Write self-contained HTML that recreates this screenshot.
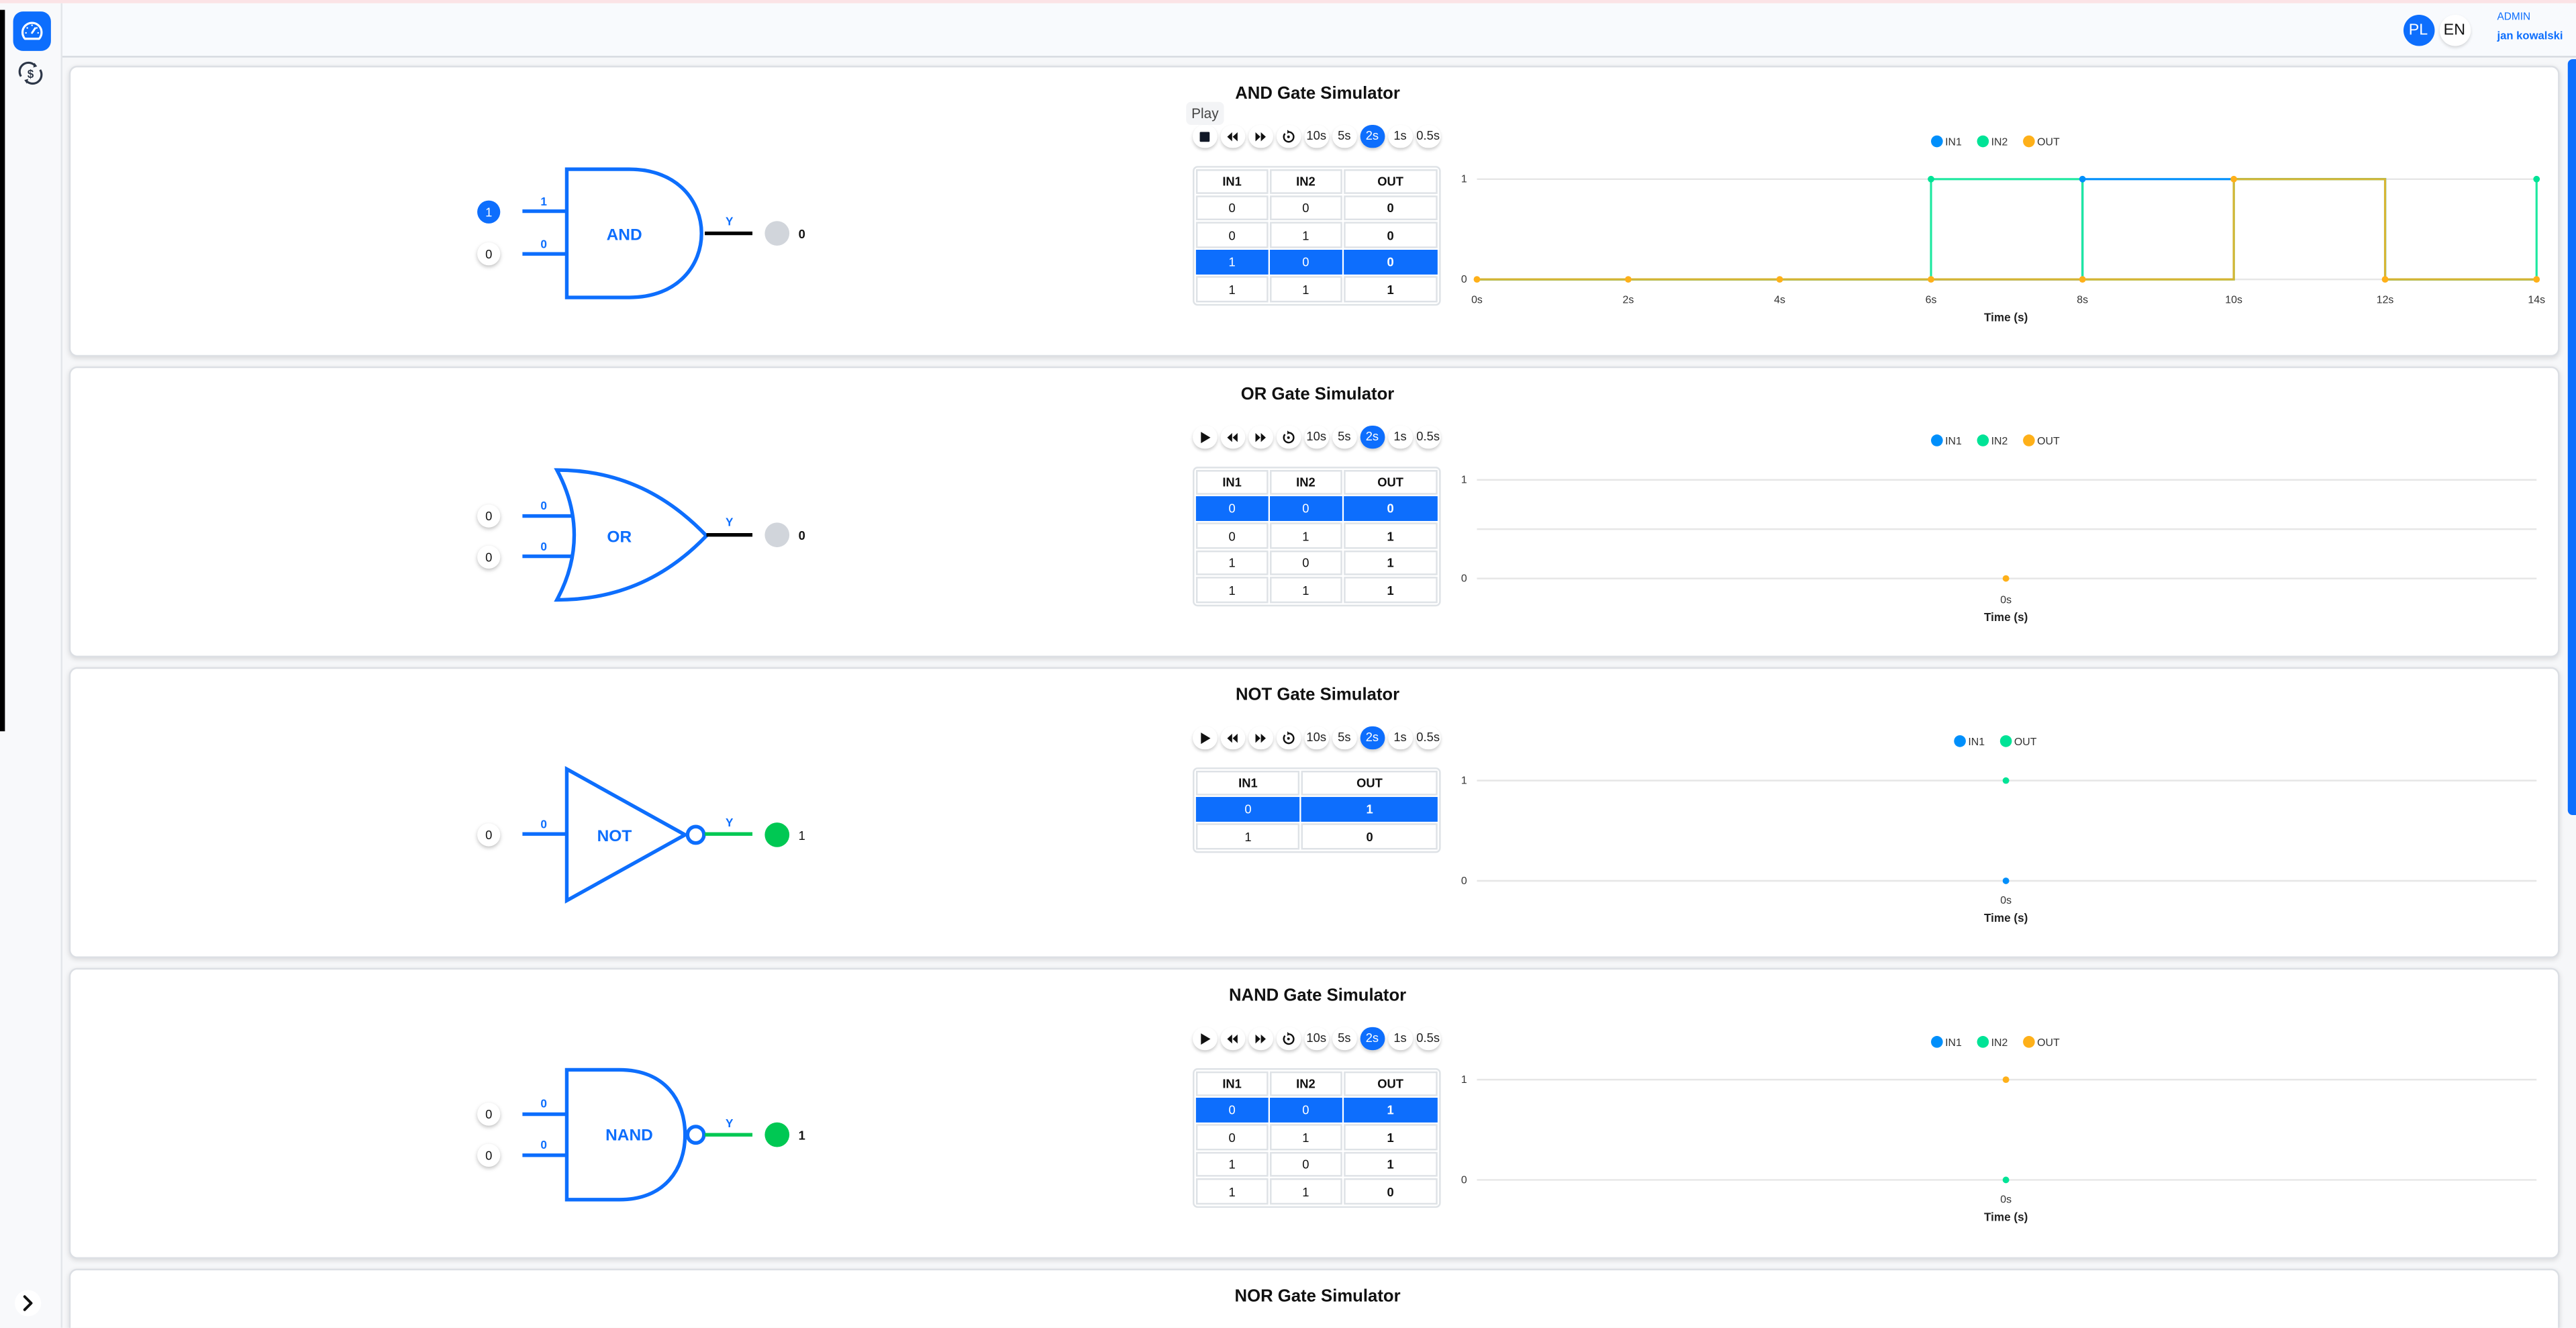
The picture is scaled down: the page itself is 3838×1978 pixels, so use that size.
<!DOCTYPE html>
<html><head><meta charset="utf-8">
<style>
html,body{margin:0;padding:0;width:3838px;height:1978px;overflow:hidden;background:#f6f7f9;font-family:"Liberation Sans",Arial,sans-serif;}
#root{position:absolute;left:0;top:0;width:1568px;height:808px;transform:scale(2.4477);transform-origin:0 0;background:#f6f7f9;overflow:hidden;}
.abs{position:absolute;}
#pink{left:0;top:0;width:1568px;height:1.5px;background:#fbe3e6;}
#side{left:0;top:1.5px;width:37px;height:806px;background:#f8f9fb;border-right:1px solid #e3e6ea;}
#blk{left:0;top:6px;width:3px;height:439px;background:#000;}
#top{left:38px;top:1.5px;width:1530px;height:32px;background:#f8fafd;border-bottom:1px solid #d6dae0;}
.card{position:absolute;left:42px;width:1514px;height:175px;background:#fff;border:1px solid #dcdfe4;border-radius:5px;box-shadow:0 1px 3px rgba(0,0,0,.12);overflow:hidden;}
.card svg{position:absolute;left:0;top:0;}
.title{position:absolute;left:659px;width:200px;top:10px;text-align:center;font-weight:bold;font-size:10.5px;color:#111;}
.ctrl{position:absolute;top:34.5px;left:683px;height:15px;}
.b{position:absolute;top:0;width:14.5px;height:14.5px;border-radius:50%;background:#fff;box-shadow:0 1.2px 2px rgba(0,0,0,.2);font-size:7.5px;color:#222;text-align:center;line-height:14.5px;}
.b.on{background:#0d6efd;color:#fff;}
table.t{position:absolute;left:683px;top:59.5px;border-collapse:separate;border-spacing:1.2px;border:1px solid #dee2e6;border-radius:3px;font-size:7.5px;color:#111;}
table.t td{border:1px solid #dee2e6;text-align:center;height:13.6px;padding:0;line-height:13px;}
table.t tr.h td{font-weight:bold;height:13.2px;}
table.t tr.s td{background:#0d6efd;color:#fff;border-color:#0d6efd;}
table.t td.o{font-weight:bold;}
.play{position:absolute;left:679px;top:21px;width:23px;height:14px;background:#f3f4f6;border-radius:3px;font-size:8.5px;color:#444;line-height:14px;text-align:center;}
</style></head><body><div id="root">
<div class="abs" id="pink"></div>
<div class="abs" id="top"></div>
<div class="abs" id="side"></div>
<div class="abs" id="blk"></div>
<svg class="abs" style="left:0;top:0" width="37" height="808">
<rect x="8" y="7" width="23" height="24" rx="6" fill="#0d6efd"/>
<path d="M15.2,23.6 A5.8,5.8 0 1 1 23.8,23.6 Z" fill="none" stroke="#fff" stroke-width="1.3" stroke-linejoin="round"/>
<line x1="19.5" y1="20" x2="21.4" y2="17.2" stroke="#fff" stroke-width="1.2" stroke-linecap="round"/>
<circle cx="19.5" cy="15.4" r=".5" fill="#fff"/><circle cx="16.6" cy="17" r=".5" fill="#fff"/><circle cx="22.4" cy="17" r=".5" fill="#fff"/><circle cx="15.8" cy="20" r=".5" fill="#fff"/><circle cx="23.2" cy="20" r=".5" fill="#fff"/>
<g fill="none" stroke="#2d3748" stroke-width="1.3">
<path d="M12.8,46.5 A5.4,5.4 0 0 1 21,39.6"/><path d="M24.4,42.5 A5.4,5.4 0 0 1 16.3,49.5"/>
</g>
<path d="M21,38.2 L22.6,40.4 L20.2,41.1 Z M16.3,50.9 L14.8,48.7 L17.2,48 Z" fill="#2d3748"/>
<text x="18.6" y="47.3" font-size="7" font-weight="bold" fill="#2d3748" text-anchor="middle">$</text>
<circle cx="17" cy="793" r="8" fill="#fff"/>
<path d="M15,789 L19,793 L15,797" fill="none" stroke="#111" stroke-width="1.6" stroke-linecap="round" stroke-linejoin="round"/>
</svg>
<div class="abs" style="left:1462.5px;top:8.5px;width:19px;height:19px;border-radius:50%;background:#0d6efd;color:#fff;font-size:9.5px;line-height:19px;text-align:center;">PL</div>
<div class="abs" style="left:1484.5px;top:8.5px;width:19px;height:19px;border-radius:50%;background:#fff;box-shadow:0 1px 2px rgba(0,0,0,.15);color:#111;font-size:9.5px;line-height:19px;text-align:center;">EN</div>
<div class="abs" style="left:1520px;top:7px;font-size:6.3px;color:#0d6efd;">ADMIN</div>
<div class="abs" style="left:1520px;top:18.5px;font-size:6.8px;color:#0d6efd;font-weight:bold;">jan kowalski</div>
<div class="abs" style="left:1563px;top:36px;width:5px;height:460px;background:#0d6efd;border-radius:3px 0 0 3px;"></div>

<!-- CARD 1 AND -->
<div class="card" style="top:40px;">
<div class="title">AND Gate Simulator</div>
<div class="play">Play</div>
<div class="ctrl">
<div class="b" style="left:0"><svg width="14.5" height="14.5"><rect x="4.3" y="4.3" width="6" height="6" rx=".6" fill="#111827"/></svg></div>
<div class="b" style="left:17px"><svg width="14.5" height="14.5"><path d="M7,4.5 L4,7.25 L7,10 Z M10.3,4.5 L7.3,7.25 L10.3,10 Z" fill="#111"/></svg></div>
<div class="b" style="left:34px"><svg width="14.5" height="14.5"><path d="M4.2,4.5 L7.2,7.25 L4.2,10 Z M7.5,4.5 L10.5,7.25 L7.5,10 Z" fill="#111"/></svg></div>
<div class="b" style="left:51px"><svg width="14.5" height="14.5"><path d="M5.2,5.3 A3,3 0 1 0 7.3,4.3" fill="none" stroke="#111" stroke-width="1"/><path d="M6.6,3 L8.2,4.3 L6.6,5.4Z" fill="#111"/><circle cx="7.3" cy="7.3" r=".8" fill="#111"/></svg></div>
<div class="b" style="left:68px">10s</div><div class="b" style="left:85px">5s</div><div class="b on" style="left:102px">2s</div><div class="b" style="left:119px">1s</div><div class="b" style="left:136px">0.5s</div>
</div>
<table class="t" style="width:151px;"><tr class="h"><td>IN1</td><td>IN2</td><td>OUT</td></tr>
<tr><td>0</td><td>0</td><td class="o">0</td></tr>
<tr><td>0</td><td>1</td><td class="o">0</td></tr>
<tr class="s"><td>1</td><td>0</td><td class="o">0</td></tr>
<tr><td>1</td><td>1</td><td class="o">1</td></tr></table>
<svg width="1514" height="175">
<circle cx="254.5" cy="88" r="7" fill="#0d6efd"/><text x="254.5" y="90.7" font-size="7.5" fill="#fff" text-anchor="middle">1</text>
<circle cx="254.5" cy="113.5" r="7" fill="#fff" style="filter:drop-shadow(0 1px 1.2px rgba(0,0,0,.25))"/><text x="254.5" y="116.2" font-size="7.5" fill="#111" text-anchor="middle">0</text>
<g stroke="#0d6efd" stroke-width="2.2" fill="none">
<line x1="275" y1="87.5" x2="302" y2="87.5"/><line x1="275" y1="113.5" x2="302" y2="113.5"/>
<path d="M302,62 H340 C370,62 384,82 384,101 C384,120 370,140 340,140 H302 Z"/>
</g>
<text x="288" y="84" font-size="7" font-weight="bold" fill="#0d6efd" text-anchor="middle">1</text>
<text x="288" y="110" font-size="7" font-weight="bold" fill="#0d6efd" text-anchor="middle">0</text>
<text x="337" y="105" font-size="10" font-weight="bold" fill="#0d6efd" text-anchor="middle">AND</text>
<line x1="386" y1="101" x2="415" y2="101" stroke="#000" stroke-width="2.2"/>
<text x="401" y="96" font-size="7" font-weight="bold" fill="#0d6efd" text-anchor="middle">Y</text>
<circle cx="430" cy="101" r="7.5" fill="#d1d5db"/>
<text x="443" y="104" font-size="7.5" font-weight="bold" fill="#111">0</text>
<g font-size="6.5" fill="#333">
<circle cx="1136" cy="45" r="3.6" fill="#008ffb"/><text x="1141" y="47.5">IN1</text>
<circle cx="1164" cy="45" r="3.6" fill="#00e396"/><text x="1169" y="47.5">IN2</text>
<circle cx="1192" cy="45" r="3.6" fill="#feb019"/><text x="1197" y="47.5">OUT</text>
</g>
<line x1="856" y1="68" x2="1501" y2="68" stroke="#e6e6e6" stroke-width="1"/>
<line x1="856" y1="129" x2="1501" y2="129" stroke="#e6e6e6" stroke-width="1"/>
<text x="850" y="70" font-size="6.5" fill="#333" text-anchor="end">1</text>
<text x="850" y="131" font-size="6.5" fill="#333" text-anchor="end">0</text>
<g fill="none" stroke-width="1.3">
<path d="M856,129 H1224.6 V68 H1408.8 V129 H1501" stroke="#008ffb"/>
<path d="M856,129 H1132.4 V68 H1224.6 V129 H1316.7 V68 H1408.8 V129 H1501 V68" stroke="#1ee8a0"/>
<path d="M856,129 H1316.7 V68 H1408.8 V129 H1501" stroke="#d6b534"/>
</g>
<g fill="#feb019"><circle cx="856" cy="129" r="2"/><circle cx="948.1" cy="129" r="2"/><circle cx="1040.3" cy="129" r="2"/><circle cx="1132.4" cy="129" r="2"/><circle cx="1224.6" cy="129" r="2"/><circle cx="1316.7" cy="68" r="2"/><circle cx="1408.8" cy="129" r="2"/><circle cx="1501" cy="129" r="2"/></g>
<circle cx="1132.4" cy="68" r="2" fill="#00e396"/><circle cx="1224.6" cy="68" r="2" fill="#008ffb"/><circle cx="1501" cy="68" r="2" fill="#00e396"/>
<g font-size="6.5" fill="#333" text-anchor="middle">
<text x="856" y="143.5">0s</text><text x="948.1" y="143.5">2s</text><text x="1040.3" y="143.5">4s</text><text x="1132.4" y="143.5">6s</text><text x="1224.6" y="143.5">8s</text><text x="1316.7" y="143.5">10s</text><text x="1408.8" y="143.5">12s</text><text x="1501" y="143.5">14s</text>
</g>
<text x="1178" y="154.5" font-size="7" font-weight="bold" fill="#222" text-anchor="middle">Time (s)</text>
</svg>
</div>

<!-- CARD 2 OR -->
<div class="card" style="top:223px;">
<div class="title">OR Gate Simulator</div>
<div class="ctrl">
<div class="b" style="left:0"><svg width="14.5" height="14.5"><path d="M5,3.8 L10.8,7.25 L5,10.7 Z" fill="#111"/></svg></div>
<div class="b" style="left:17px"><svg width="14.5" height="14.5"><path d="M7,4.5 L4,7.25 L7,10 Z M10.3,4.5 L7.3,7.25 L10.3,10 Z" fill="#111"/></svg></div>
<div class="b" style="left:34px"><svg width="14.5" height="14.5"><path d="M4.2,4.5 L7.2,7.25 L4.2,10 Z M7.5,4.5 L10.5,7.25 L7.5,10 Z" fill="#111"/></svg></div>
<div class="b" style="left:51px"><svg width="14.5" height="14.5"><path d="M5.2,5.3 A3,3 0 1 0 7.3,4.3" fill="none" stroke="#111" stroke-width="1"/><path d="M6.6,3 L8.2,4.3 L6.6,5.4Z" fill="#111"/><circle cx="7.3" cy="7.3" r=".8" fill="#111"/></svg></div>
<div class="b" style="left:68px">10s</div><div class="b" style="left:85px">5s</div><div class="b on" style="left:102px">2s</div><div class="b" style="left:119px">1s</div><div class="b" style="left:136px">0.5s</div>
</div>
<table class="t" style="width:151px;"><tr class="h"><td>IN1</td><td>IN2</td><td>OUT</td></tr>
<tr class="s"><td>0</td><td>0</td><td class="o">0</td></tr>
<tr><td>0</td><td>1</td><td class="o">1</td></tr>
<tr><td>1</td><td>0</td><td class="o">1</td></tr>
<tr><td>1</td><td>1</td><td class="o">1</td></tr></table>
<svg width="1514" height="175">
<circle cx="254.5" cy="90" r="7" fill="#fff" style="filter:drop-shadow(0 1px 1.2px rgba(0,0,0,.25))"/><text x="254.5" y="92.7" font-size="7.5" fill="#111" text-anchor="middle">0</text>
<circle cx="254.5" cy="115" r="7" fill="#fff" style="filter:drop-shadow(0 1px 1.2px rgba(0,0,0,.25))"/><text x="254.5" y="117.7" font-size="7.5" fill="#111" text-anchor="middle">0</text>
<g stroke="#0d6efd" stroke-width="2.2" fill="none">
<line x1="275" y1="90" x2="305" y2="90"/><line x1="275" y1="114.5" x2="305" y2="114.5"/>
<path d="M296,62 C335,62 364,78 387,102 C364,126 335,141 296,141 C310,115 310,88 296,62 Z"/>
</g>
<text x="288" y="86" font-size="7" font-weight="bold" fill="#0d6efd" text-anchor="middle">0</text>
<text x="288" y="111" font-size="7" font-weight="bold" fill="#0d6efd" text-anchor="middle">0</text>
<text x="334" y="106" font-size="10" font-weight="bold" fill="#0d6efd" text-anchor="middle">OR</text>
<line x1="387" y1="101.5" x2="415" y2="101.5" stroke="#000" stroke-width="2.2"/>
<text x="401" y="96" font-size="7" font-weight="bold" fill="#0d6efd" text-anchor="middle">Y</text>
<circle cx="430" cy="101.5" r="7.5" fill="#d1d5db"/>
<text x="443" y="104.5" font-size="7.5" font-weight="bold" fill="#111">0</text>
<g font-size="6.5" fill="#333">
<circle cx="1136" cy="44" r="3.6" fill="#008ffb"/><text x="1141" y="46.5">IN1</text>
<circle cx="1164" cy="44" r="3.6" fill="#00e396"/><text x="1169" y="46.5">IN2</text>
<circle cx="1192" cy="44" r="3.6" fill="#feb019"/><text x="1197" y="46.5">OUT</text>
</g>
<g stroke="#e6e6e6" stroke-width="1"><line x1="856" y1="68" x2="1501" y2="68"/><line x1="856" y1="98" x2="1501" y2="98"/><line x1="856" y1="128" x2="1501" y2="128"/></g>
<text x="850" y="70" font-size="6.5" fill="#333" text-anchor="end">1</text>
<text x="850" y="130" font-size="6.5" fill="#333" text-anchor="end">0</text>
<circle cx="1178" cy="128" r="2" fill="#feb019"/>
<text x="1178" y="143" font-size="6.5" fill="#333" text-anchor="middle">0s</text>
<text x="1178" y="154" font-size="7" font-weight="bold" fill="#222" text-anchor="middle">Time (s)</text>
</svg>
</div>

<!-- CARD 3 NOT -->
<div class="card" style="top:406px;">
<div class="title">NOT Gate Simulator</div>
<div class="ctrl">
<div class="b" style="left:0"><svg width="14.5" height="14.5"><path d="M5,3.8 L10.8,7.25 L5,10.7 Z" fill="#111"/></svg></div>
<div class="b" style="left:17px"><svg width="14.5" height="14.5"><path d="M7,4.5 L4,7.25 L7,10 Z M10.3,4.5 L7.3,7.25 L10.3,10 Z" fill="#111"/></svg></div>
<div class="b" style="left:34px"><svg width="14.5" height="14.5"><path d="M4.2,4.5 L7.2,7.25 L4.2,10 Z M7.5,4.5 L10.5,7.25 L7.5,10 Z" fill="#111"/></svg></div>
<div class="b" style="left:51px"><svg width="14.5" height="14.5"><path d="M5.2,5.3 A3,3 0 1 0 7.3,4.3" fill="none" stroke="#111" stroke-width="1"/><path d="M6.6,3 L8.2,4.3 L6.6,5.4Z" fill="#111"/><circle cx="7.3" cy="7.3" r=".8" fill="#111"/></svg></div>
<div class="b" style="left:68px">10s</div><div class="b" style="left:85px">5s</div><div class="b on" style="left:102px">2s</div><div class="b" style="left:119px">1s</div><div class="b" style="left:136px">0.5s</div>
</div>
<table class="t" style="width:151px;"><tr class="h"><td>IN1</td><td>OUT</td></tr>
<tr class="s"><td>0</td><td class="o">1</td></tr>
<tr><td>1</td><td class="o">0</td></tr></table>
<svg width="1514" height="175">
<circle cx="254.5" cy="101" r="7" fill="#fff" style="filter:drop-shadow(0 1px 1.2px rgba(0,0,0,.25))"/><text x="254.5" y="103.7" font-size="7.5" fill="#111" text-anchor="middle">0</text>
<g stroke="#0d6efd" stroke-width="2.2" fill="none">
<line x1="275" y1="100.5" x2="302" y2="100.5"/>
<path d="M302,61 L374,101 L302,141 Z" stroke-linejoin="miter"/>
<circle cx="380.5" cy="101" r="5"/>
</g>
<text x="288" y="97" font-size="7" font-weight="bold" fill="#0d6efd" text-anchor="middle">0</text>
<text x="331" y="105" font-size="10" font-weight="bold" fill="#0d6efd" text-anchor="middle">NOT</text>
<line x1="386" y1="100.5" x2="415" y2="100.5" stroke="#00c853" stroke-width="2.2"/>
<text x="401" y="96" font-size="7" font-weight="bold" fill="#0d6efd" text-anchor="middle">Y</text>
<circle cx="430" cy="101" r="7.5" fill="#00c853"/>
<text x="443" y="104" font-size="7.5" fill="#111">1</text>
<g font-size="6.5" fill="#333">
<circle cx="1150" cy="44" r="3.6" fill="#008ffb"/><text x="1155" y="46.5">IN1</text>
<circle cx="1178" cy="44" r="3.6" fill="#00e396"/><text x="1183" y="46.5">OUT</text>
</g>
<g stroke="#e6e6e6" stroke-width="1"><line x1="856" y1="68" x2="1501" y2="68"/><line x1="856" y1="129" x2="1501" y2="129"/></g>
<text x="850" y="70" font-size="6.5" fill="#333" text-anchor="end">1</text>
<text x="850" y="131" font-size="6.5" fill="#333" text-anchor="end">0</text>
<circle cx="1178" cy="68" r="2" fill="#00e396"/><circle cx="1178" cy="129" r="2" fill="#008ffb"/>
<text x="1178" y="143" font-size="6.5" fill="#333" text-anchor="middle">0s</text>
<text x="1178" y="154" font-size="7" font-weight="bold" fill="#222" text-anchor="middle">Time (s)</text>
</svg>
</div>

<!-- CARD 4 NAND -->
<div class="card" style="top:589px;">
<div class="title">NAND Gate Simulator</div>
<div class="ctrl">
<div class="b" style="left:0"><svg width="14.5" height="14.5"><path d="M5,3.8 L10.8,7.25 L5,10.7 Z" fill="#111"/></svg></div>
<div class="b" style="left:17px"><svg width="14.5" height="14.5"><path d="M7,4.5 L4,7.25 L7,10 Z M10.3,4.5 L7.3,7.25 L10.3,10 Z" fill="#111"/></svg></div>
<div class="b" style="left:34px"><svg width="14.5" height="14.5"><path d="M4.2,4.5 L7.2,7.25 L4.2,10 Z M7.5,4.5 L10.5,7.25 L7.5,10 Z" fill="#111"/></svg></div>
<div class="b" style="left:51px"><svg width="14.5" height="14.5"><path d="M5.2,5.3 A3,3 0 1 0 7.3,4.3" fill="none" stroke="#111" stroke-width="1"/><path d="M6.6,3 L8.2,4.3 L6.6,5.4Z" fill="#111"/><circle cx="7.3" cy="7.3" r=".8" fill="#111"/></svg></div>
<div class="b" style="left:68px">10s</div><div class="b" style="left:85px">5s</div><div class="b on" style="left:102px">2s</div><div class="b" style="left:119px">1s</div><div class="b" style="left:136px">0.5s</div>
</div>
<table class="t" style="width:151px;"><tr class="h"><td>IN1</td><td>IN2</td><td>OUT</td></tr>
<tr class="s"><td>0</td><td>0</td><td class="o">1</td></tr>
<tr><td>0</td><td>1</td><td class="o">1</td></tr>
<tr><td>1</td><td>0</td><td class="o">1</td></tr>
<tr><td>1</td><td>1</td><td class="o">0</td></tr></table>
<svg width="1514" height="175">
<circle cx="254.5" cy="88" r="7" fill="#fff" style="filter:drop-shadow(0 1px 1.2px rgba(0,0,0,.25))"/><text x="254.5" y="90.7" font-size="7.5" fill="#111" text-anchor="middle">0</text>
<circle cx="254.5" cy="113" r="7" fill="#fff" style="filter:drop-shadow(0 1px 1.2px rgba(0,0,0,.25))"/><text x="254.5" y="115.7" font-size="7.5" fill="#111" text-anchor="middle">0</text>
<g stroke="#0d6efd" stroke-width="2.2" fill="none">
<line x1="275" y1="88" x2="302" y2="88"/><line x1="275" y1="113" x2="302" y2="113"/>
<path d="M302,61 H334 C362,61 374,80 374,100.5 C374,121 362,140 334,140 H302 Z"/>
<circle cx="380.5" cy="100.5" r="5"/>
</g>
<text x="288" y="84" font-size="7" font-weight="bold" fill="#0d6efd" text-anchor="middle">0</text>
<text x="288" y="109" font-size="7" font-weight="bold" fill="#0d6efd" text-anchor="middle">0</text>
<text x="340" y="104" font-size="10" font-weight="bold" fill="#0d6efd" text-anchor="middle">NAND</text>
<line x1="386" y1="100.5" x2="415" y2="100.5" stroke="#00c853" stroke-width="2.2"/>
<text x="401" y="96" font-size="7" font-weight="bold" fill="#0d6efd" text-anchor="middle">Y</text>
<circle cx="430" cy="100.5" r="7.5" fill="#00c853"/>
<text x="443" y="103.5" font-size="7.5" font-weight="bold" fill="#111">1</text>
<g font-size="6.5" fill="#333">
<circle cx="1136" cy="44" r="3.6" fill="#008ffb"/><text x="1141" y="46.5">IN1</text>
<circle cx="1164" cy="44" r="3.6" fill="#00e396"/><text x="1169" y="46.5">IN2</text>
<circle cx="1192" cy="44" r="3.6" fill="#feb019"/><text x="1197" y="46.5">OUT</text>
</g>
<g stroke="#e6e6e6" stroke-width="1"><line x1="856" y1="67" x2="1501" y2="67"/><line x1="856" y1="128" x2="1501" y2="128"/></g>
<text x="850" y="69" font-size="6.5" fill="#333" text-anchor="end">1</text>
<text x="850" y="130" font-size="6.5" fill="#333" text-anchor="end">0</text>
<circle cx="1178" cy="67" r="2" fill="#feb019"/><circle cx="1178" cy="128" r="2" fill="#00e396"/>
<text x="1178" y="142" font-size="6.5" fill="#333" text-anchor="middle">0s</text>
<text x="1178" y="153" font-size="7" font-weight="bold" fill="#222" text-anchor="middle">Time (s)</text>
</svg>
</div>

<!-- CARD 5 NOR -->
<div class="card" style="top:772px;height:36px;border-bottom:none;border-radius:5px 5px 0 0;">
<div class="title">NOR Gate Simulator</div>
</div>
</div></body></html>
